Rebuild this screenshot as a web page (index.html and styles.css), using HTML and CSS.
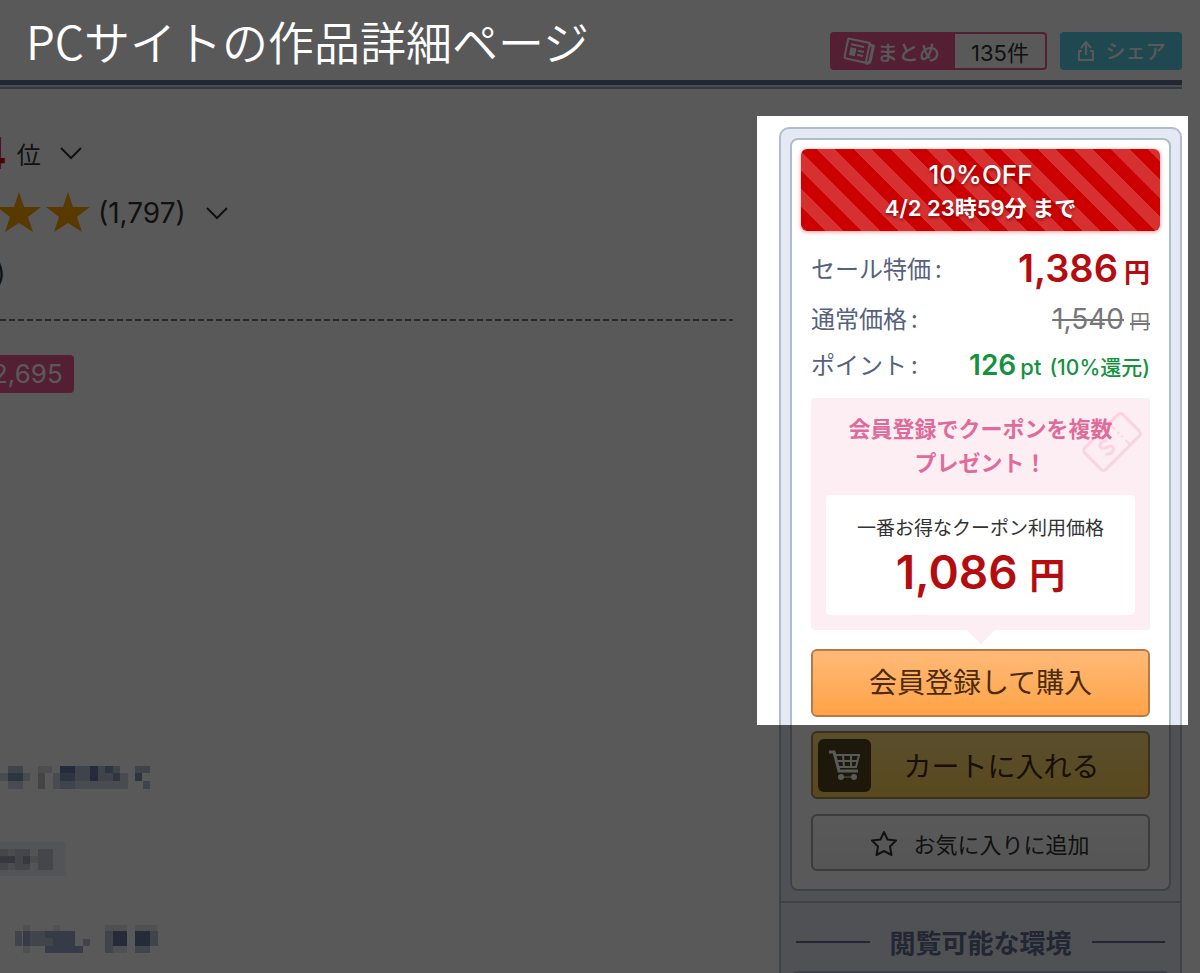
FILE: index.html
```
<!DOCTYPE html>
<html lang="ja">
<head>
  <meta charset="UTF-8">
  <meta name="viewport" content="width=device-width, initial-scale=1">
  <title>PCサイトの作品詳細ページ</title>
  <link rel="stylesheet" href="styles.css">
</head>
<body>
  <div class="page">
    <header class="header">
      <h1 class="title">PCサイトの作品詳細ページ</h1>
      <div class="header-actions">
        <a href="#" class="matome">
          <span class="matome-label">
            <svg width="32" height="30" viewBox="0 0 32 30" fill="none" stroke="currentColor" stroke-width="2" stroke-linejoin="round">
              <g transform="rotate(12 16 15)">
                <path d="M3 5h22v20H5a2 2 0 0 1-2-2z" stroke-width="2"/>
                <path d="M25 7h4v15a3 3 0 0 1-4 3" stroke-width="3"/>
                <path d="M7 10h13M15 15h6M15 19h6"/>
                <path d="M7 13h6v8H7z" fill="currentColor" stroke="none"/>
              </g>
            </svg>
            まとめ
          </span>
          <span class="matome-count"><span class="num">135</span>件</span>
        </a>
        <button type="button" class="share">
          <svg width="18" height="22" viewBox="0 0 18 22" fill="none" stroke="currentColor" stroke-width="2">
            <path d="M9 15V3M4 8l5-6 5 6M5 11H2v9h14v-9h-3"/>
          </svg>
          シェア
        </button>
      </div>
    </header>

    <div class="content">
      <main class="work">
        <div class="rank">
          <strong class="num">4</strong><span>位</span>
          <svg class="chevron" width="22" height="13" viewBox="0 0 22 13"><path d="M1 1l10 10L21 1"/></svg>
        </div>
        <div class="rating">
          <svg class="stars" width="94" height="44" viewBox="0 0 94 44">
            <path id="star" d="M22 1l5 15h17L31 26l5 15-14-9-14 9 5-15L0 16h17z"/>
            <use href="#star" x="49"/>
          </svg>
          <span class="num">(1,797)</span>
          <svg class="chevron" width="22" height="13" viewBox="0 0 22 13"><path d="M1 1l10 10L21 1"/></svg>
        </div>
        <div class="reviews num">)</div>
        <svg class="divider" width="100%" height="2"><path d="M0 1H2000"/></svg>
        <span class="sales num">2,695</span>

        <svg class="mosaic mosaic-a" width="152" height="24" viewBox="0 0 152 24">
          <path fill="#cfd6e4" d="M0 8h30v8H0zM53 8h75v16H53zM8 16h15v8H8z"/>
          <path fill="#b4bfd6" d="M8 1h15v7H8zM75 1h45v15H75zM135 1h15v7h-15zM143 16h7v8h-7zM60 16h15v8H60z"/>
          <path fill="#dcdcdc" d="M38 1h14v7H38z"/>
          <path fill="#c4c4c4" d="M38 8h7v16h-7z"/>
          <path fill="#8794bb" d="M8 8h15v8H8zM60 8h15v8H60zM113 8h7v8h-7zM135 8h7v8h-7zM105 1h8v7h-8z"/>
          <path fill="#6c7ba8" d="M60 1h15v7H60zM90 1h8v15h-8z"/>
        </svg>
        <svg class="mosaic mosaic-b" width="66" height="34" viewBox="0 0 66 34">
          <path fill="#ecf0f8" d="M0 0h66v34H0z"/>
          <path fill="#c3c9d6" d="M0 7h8v21H0zM15 7h15v21H15zM38 7h15v21H38z"/>
          <path fill="#d5d9e2" d="M8 7h7v21H8zM30 14h8v7h-8z"/>
          <path fill="#97a0b4" d="M0 14h15v7H0zM23 14h7v8h-7z"/>
        </svg>
        <svg class="mosaic mosaic-c" width="158" height="28" viewBox="0 0 158 28">
          <path fill="#e0e4ec" d="M23 0h7v28h-7zM53 0h7v7h-7zM105 0h22v28h-22zM135 0h22v7h-22z"/>
          <path fill="#b9c2d8" d="M15 6h7v15h-7zM30 6h23v15H30zM83 14h7v7h-7zM105 6h8v22h-8zM135 21h15v7h-15zM150 6h8v15h-8z"/>
          <path fill="#9ca9ca" d="M23 6h7v15h-7zM45 6h30v7H45zM53 13h22v15H53zM45 21h8v7h-8zM75 21h8v7h-8z"/>
          <path fill="#6d7ba6" d="M113 6h14v15h-14zM135 6h15v15h-15z"/>
        </svg>
      </main>

      <aside class="sidebar">
        <div class="buy-box">
          <div class="buy-main">
            <div class="sale-banner">
              <p class="sale-rate num">10%OFF</p>
              <p class="sale-limit num">4/2 23時59分 まで</p>
            </div>

            <dl class="prices">
              <div class="price-row sale-price">
                <dt>セール特価<i>:</i></dt>
                <dd><b class="num">1,386</b><span>円</span></dd>
              </div>
              <div class="price-row normal-price">
                <dt>通常価格<i>:</i></dt>
                <dd><s><b class="num">1,540</b><span>円</span></s></dd>
              </div>
              <div class="price-row points">
                <dt>ポイント<i>:</i></dt>
                <dd class="num"><b>126</b><span>pt</span><small>(10%還元)</small></dd>
              </div>
            </dl>

            <div class="coupon">
              <svg class="ticket" width="64" height="64" viewBox="0 0 64 64" fill="none" stroke="currentColor" stroke-width="3">
                <g transform="rotate(-45 32 32)">
                  <rect x="5" y="17" width="54" height="30" rx="3"/>
                  <path d="M43 18v7M43 29v2M43 34v2M43 40v7" stroke-width="2"/>
                  <path d="M29 28c-1-4-9-4-9 0s9 4 9 8-8 4-10 0M24 23v3M24 38v3"/>
                </g>
              </svg>
              <p class="coupon-text">会員登録でクーポンを複数<br>プレゼント！</p>
              <div class="coupon-price">
                <p>一番お得なクーポン利用価格</p>
                <p class="coupon-value num">1,086 <span>円</span></p>
              </div>
            </div>

            <button type="button" class="btn btn-buy">会員登録して購入</button>
          </div>

          <button type="button" class="btn btn-cart">
            <span class="cart-icon">
              <svg width="32" height="30" viewBox="0 0 32 30" fill="none" stroke="currentColor" stroke-width="2">
                <path d="M0 2h5l5 19h19" stroke-width="3"/>
                <path d="M6 5h24l-3 12H9M7 11h21M14 5l1 12M22 5v12" stroke-width="2"/>
                <circle cx="12" cy="27" r="2" fill="currentColor"/>
                <circle cx="25" cy="27" r="2" fill="currentColor"/>
                <path d="M12 27h13" stroke-width="1"/>
              </svg>
            </span>
            <span class="cart-text">カートに入れる</span>
          </button>

          <button type="button" class="btn btn-favorite">
            <svg width="26" height="26" viewBox="0 0 26 26" fill="none" stroke="currentColor" stroke-width="2" stroke-linejoin="round">
              <path d="M13 2l3.500 7.500 8.500 1-6 6 1.500 8.500-7.500-4-7.500 4L7 16.500l-6-6 8.500-1z"/>
            </svg>
            お気に入りに追加
          </button>
        </div>

        <section class="environment">
          <h2>閲覧可能な環境</h2>
          <div class="environment-list"></div>
        </section>
      </aside>
    </div>
  </div>
</body>
</html>
```
FILE: styles.css
```
* {
  margin: 0;
  padding: 0;
  box-sizing: border-box;
}

body {
  background: #fff;
  color: #333;
  font-family: "Noto Sans CJK JP", sans-serif;
  font-size: 24px;
}

button {
  font-family: inherit;
  cursor: pointer;
}

a {
  text-decoration: none;
}

.num {
  font-family: Inter, "Noto Sans CJK JP", sans-serif;
}

.page {
  position: relative;
  height: 100vh;
  overflow: hidden;
}

/* header */
.header {
  display: flex;
  justify-content: space-between;
  align-items: center;
  height: 89px;
  margin-right: 18px;
  padding: 14px 0 0 26px;
  border-bottom: 2px solid #9aa3b8;
  box-shadow: inset 0 -2px #d5d9e2, inset 0 -7px #616f92;
}

.title {
  position: relative;
  z-index: 20;
  margin-bottom: 22px;
  color: #fff;
  font-size: 46px;
  font-weight: 350;
  line-height: 60px;
}

.header-actions {
  display: flex;
  gap: 13px;
}

.matome {
  display: flex;
  height: 38px;
  border: 2px solid #f0598f;
  border-radius: 4px;
  color: #333;
  font-size: 22px;
  line-height: 34px;
}

.matome-label {
  display: flex;
  align-items: center;
  gap: 2px;
  width: 123px;
  padding-left: 11px;
  background: #f0598f;
  color: #fff;
  font-size: 21px;
  font-weight: 500;
}

.matome-count {
  padding: 0 16px;
}

.share {
  display: flex;
  align-items: center;
  justify-content: center;
  gap: 11px;
  width: 122px;
  height: 38px;
  border: 0;
  border-radius: 4px;
  background: #5bcfe4;
  color: #fff;
  font-size: 20px;
  font-weight: 500;
}

.content {
  display: flex;
  justify-content: space-between;
}

/* left column, runs off the left edge */
.work {
  display: flex;
  flex-direction: column;
  align-items: flex-start;
  flex: 1;
  max-width: 733px;
}

.chevron {
  fill: none;
  stroke: #333;
  stroke-width: 2;
}

.rank {
  display: flex;
  align-items: center;
  height: 60px;
  margin: 34px 0 0 -23px;
}

.rank strong {
  margin-right: 10px;
  color: #d40010;
  font-size: 44px;
  line-height: 60px;
}

.rank .chevron {
  margin-left: 19px;
}

.rating {
  display: flex;
  align-items: center;
  height: 60px;
  margin-left: -3px;
  font-size: 28px;
}

.stars {
  margin-right: 7px;
  fill: #fba400;
}

.rating .chevron {
  margin-left: 20px;
}

.reviews {
  height: 60px;
  margin-left: -4px;
  font-size: 26px;
  line-height: 60px;
}

.divider {
  margin-top: 16px;
  stroke: #777;
  stroke-width: 2;
  stroke-dasharray: 6 3;
}

.sales {
  height: 38px;
  margin: 34px 0 0 -8px;
  padding: 0 11px 0 0;
  border-radius: 4px;
  background: #f0598f;
  color: #fff;
  font-size: 26px;
  line-height: 38px;
}

.mosaic-a {
  margin-top: 372px;
}

.mosaic-b {
  margin-top: 53px;
}

.mosaic-c {
  margin-top: 49px;
}

/* right column */
.sidebar {
  width: 403px;
  margin: 38px 18px 0 0;
  padding-top: 9px;
  border: 2px solid #b1bccd;
  border-radius: 10px;
  background: #e4e9f3;
}

.buy-box {
  margin: 0 9px;
  padding: 9px 9px 18px;
  border: 2px solid #b1bccd;
  border-radius: 8px;
  background: #fff;
}

.buy-main {
  position: relative;
}

/* spotlight: everything outside this box is dimmed */
.buy-main::after {
  content: "";
  position: absolute;
  inset: -33px -28px -8px -44px;
  z-index: 10;
  box-shadow: 0 0 0 2000px rgba(0, 0, 0, 0.65);
  pointer-events: none;
}

.sale-banner {
  height: 82px;
  padding-top: 9px;
  border-radius: 6px;
  background: repeating-linear-gradient(45deg, #d63031 0 4px, #c00 4px 17px, #d63031 17px 26px);
  box-shadow: 0 1px 4px rgba(200, 0, 0, 0.4);
  color: #fff;
  font-weight: 500;
  text-align: center;
  text-shadow: 0 2px 3px rgba(90, 0, 0, 0.6);
}

.sale-rate {
  font-size: 26px;
  line-height: 34px;
}

.sale-limit {
  font-size: 22px;
  font-weight: 600;
  line-height: 32px;
}

.prices {
  padding: 12px 10px 0;
}

.price-row {
  display: flex;
  justify-content: space-between;
  align-items: center;
  height: 46px;
}

.price-row dt {
  padding-bottom: 4px;
  color: #55627d;
  line-height: 36px;
}

.price-row dt i {
  margin-left: 4px;
  font-style: normal;
}

.price-row dd {
  white-space: nowrap;
  line-height: 46px;
}

.sale-price {
  height: 54px;
}

.sale-price dd {
  color: #b50d0f;
  font-weight: 700;
}

.sale-price b {
  font-size: 38px;
  font-weight: 600;
}

.sale-price span {
  margin-left: 6px;
  font-size: 26px;
}

.normal-price dd {
  color: #777;
}

.normal-price b {
  font-size: 28px;
  font-weight: 400;
}

.normal-price span {
  padding-left: 6px;
  font-size: 20px;
}

.points dd {
  color: #16923f;
  font-weight: 500;
}

.points b {
  font-size: 28px;
  font-weight: 600;
}

.points span {
  margin: 0 8px 0 4px;
  font-size: 22px;
}

.points small {
  font-size: 21px;
}

.coupon {
  position: relative;
  margin: 9px 10px 19px;
  padding: 12px 15px 15px;
  border-radius: 4px;
  background: #fceef3;
  text-align: center;
}

.coupon::after {
  content: "";
  position: absolute;
  top: 100%;
  left: 50%;
  margin-left: -14px;
  border: 14px solid transparent;
  border-top-color: #fceef3;
  border-bottom: 0;
}

.ticket {
  position: absolute;
  top: 12px;
  right: 6px;
  color: #fad4e1;
}

.coupon-text {
  position: relative;
  margin-bottom: 17px;
  color: #e06b9b;
  font-size: 22px;
  font-weight: 700;
  line-height: 34px;
}

.coupon-price {
  padding: 18px 0 8px;
  border-radius: 4px;
  background: #fff;
  font-size: 19px;
  line-height: 28px;
}

.coupon-value {
  color: #b50d0f;
  font-size: 46px;
  font-weight: 600;
  line-height: 62px;
}

.coupon-value span {
  font-size: 36px;
}

.btn {
  display: flex;
  justify-content: center;
  align-items: center;
  width: calc(100% - 20px);
  height: 68px;
  margin: 0 10px;
  border: 2px solid #b5794a;
  border-radius: 6px;
  color: #4a2c0c;
  font-size: 28px;
}

.btn-buy {
  padding-bottom: 4px;
  background: linear-gradient(#ffba78, #ffa347);
}

.btn-cart {
  margin-top: 14px;
  padding-left: 5px;
  border-color: #a58a50;
  background: linear-gradient(#ffdf80, #ffd055);
}

.cart-icon {
  display: flex;
  justify-content: center;
  align-items: center;
  width: 53px;
  height: 53px;
  border-radius: 6px;
  background: #54461c;
  color: #fff;
}

.cart-text {
  flex: 1;
  padding-right: 16px;
}

.btn-favorite {
  gap: 16px;
  height: 57px;
  margin-top: 15px;
  border-color: #aaa;
  background: linear-gradient(#fff, #f4f4f4);
  color: #333;
  font-size: 22px;
}

.environment {
  margin-top: 10px;
  padding: 20px 9px 0;
  border-top: 2px solid #b1bccd;
}

.environment h2 {
  display: flex;
  align-items: center;
  gap: 20px;
  margin: 0 6px;
  color: #616f92;
  font-size: 26px;
  font-weight: 700;
  line-height: 38px;
}

.environment h2::before,
.environment h2::after {
  content: "";
  flex: 1;
  height: 2px;
  background: #616f92;
}

.environment-list {
  height: 120px;
  margin-top: 10px;
  border: 2px solid #b1bccd;
  border-radius: 8px;
  background: #fff;
}
```
